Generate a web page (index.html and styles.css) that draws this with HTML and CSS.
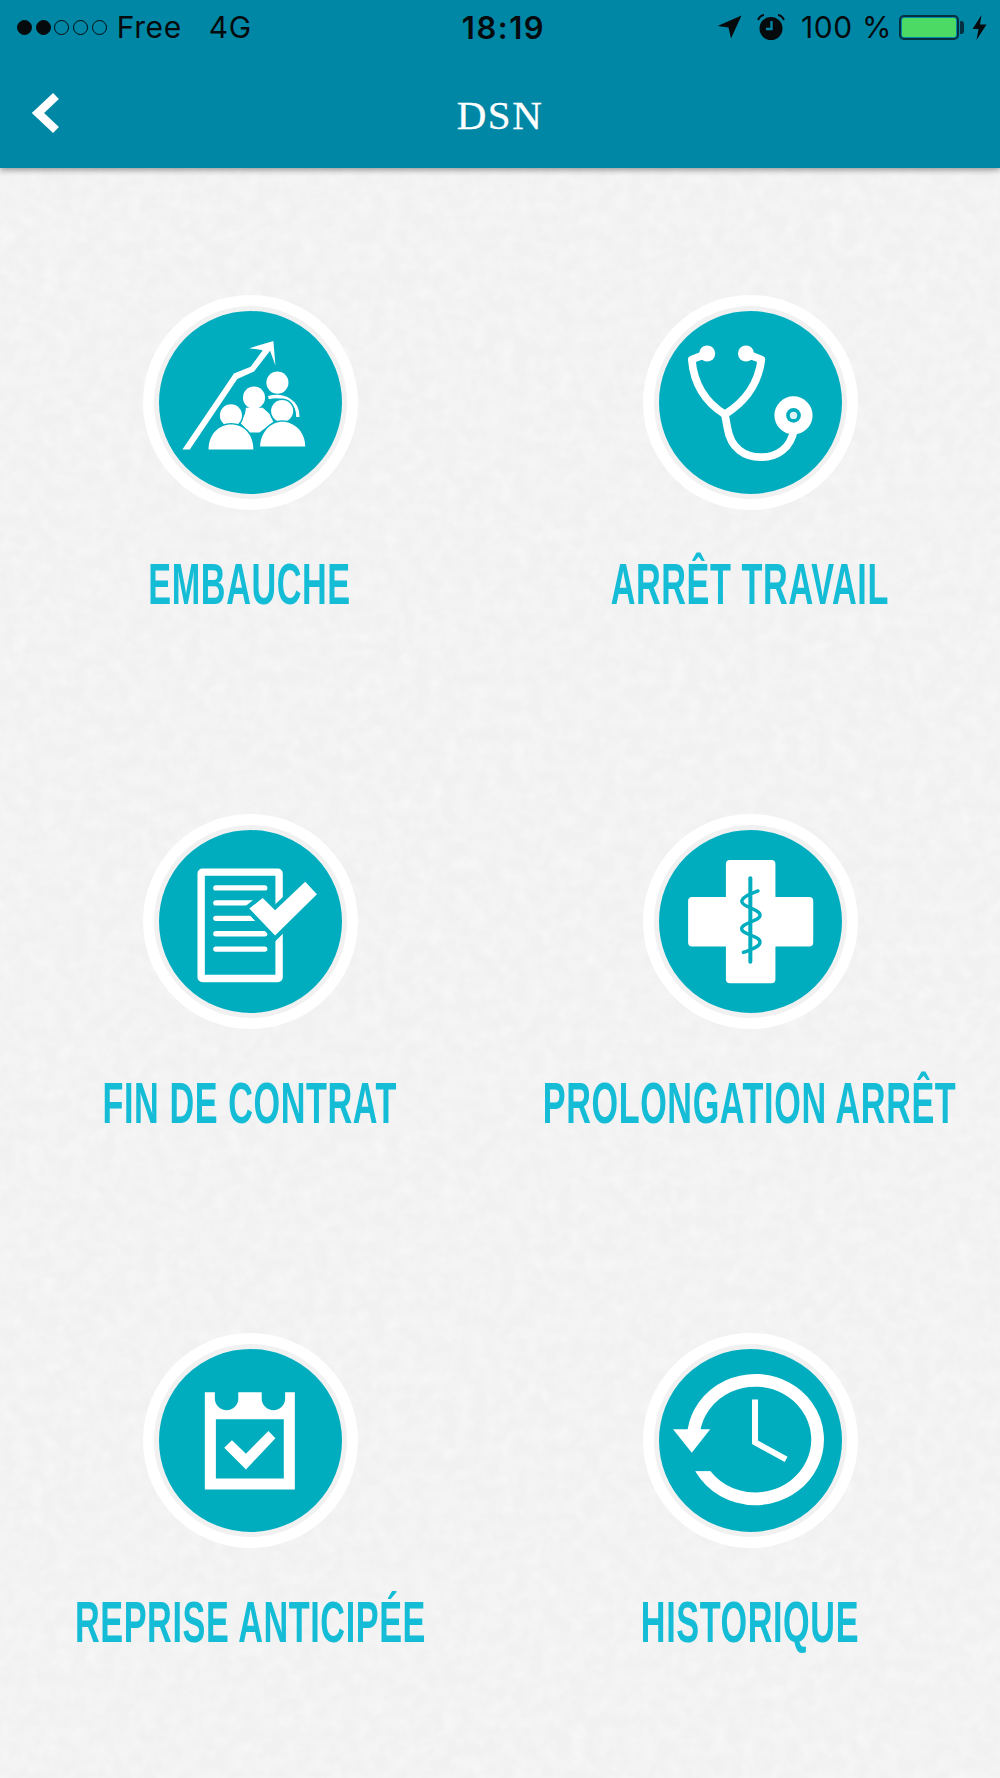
FILE: index.html
```html
<!DOCTYPE html>
<html lang="fr">
<head>
  <meta charset="UTF-8">
  <title>DSN</title>
  <link rel="stylesheet" href="styles.css">
</head>

<body>

  <!-- Paper texture behind the menu -->
  <svg class="paper" width="1000" height="1778" aria-hidden="true">
    <filter id="grain" x="0" y="0" width="100%" height="100%">
      <feTurbulence type="fractalNoise" baseFrequency="0.07" numOctaves="3" seed="4"/>
      <feColorMatrix type="matrix" values="0 0 0 0 1  0 0 0 0 1  0 0 0 0 1  0.5 0.5 0 0 -0.38"/>
    </filter>
    <rect width="1000" height="1778" filter="url(#grain)"/>
  </svg>

  <header class="topbar">
    <div class="status">
      <div class="status-left">
        <span class="signal">
          <i class="dot on"></i><i class="dot on"></i><i class="dot"></i><i class="dot"></i><i class="dot"></i>
        </span>
        <span class="carrier">Free</span>
        <span class="network">4G</span>
      </div>
      <div class="clock">18:19</div>
      <div class="status-right">
        <svg class="ico-loc" width="25" height="24" viewBox="0 0 25 24"><path d="M0.5 11 L24.5 0.5 L14 23.5 L11.5 12.5 Z"/></svg>
        <svg class="ico-alarm" width="28" height="26" viewBox="0 0 28 26">
          <circle cx="14" cy="14.5" r="11.5"/>
          <path d="M14.5 7 V15 H9" fill="none" stroke="#0087a5" stroke-width="2.4"/>
          <path d="M1 6 Q3 1.5 7 1 M27 6 Q25 1.5 21 1" fill="none" stroke="#050a0d" stroke-width="2"/>
        </svg>
        <span class="battery-pct">100 %</span>
        <span class="battery"><span class="battery-fill"></span></span>
        <svg class="ico-bolt" width="15" height="25" viewBox="0 0 15 25"><path d="M9.5 0 L0.5 14 H6.5 L4.5 25 L14.5 9.5 H8 Z"/></svg>
      </div>
    </div>
    <nav class="navbar">
      <svg class="back" width="30" height="42" viewBox="0 0 30 42"><path d="M25 4 L7 21 L25 38" fill="none" stroke="#fff" stroke-width="8.5"/></svg>
      <h1>DSN</h1>
    </nav>
  </header>

  <main class="menu">

    <a class="tile">
      <span class="disc">
        <svg viewBox="88 93 547 547">
          <path class="w" d="M158 507 H180 L322 296 L372 274 L420 212 L436 256 L430 183 L358 204 L398 210 L362 260 L312 280 Z"/>
          <circle class="w" cx="442" cy="307" r="33"/>
          <path class="wl" d="M415 352 C460 340 505 362 503 410"/>
          <circle class="w" cx="372" cy="352" r="33"/>
          <path class="w" d="M348 382 H398 L418 400 L430 425 L388 456 H356 L332 428 L345 400 Z"/>
          <circle class="wt" cx="303" cy="405" r="33"/>
          <path class="wt" d="M236 507 C236 460 268 432 303 432 C342 432 370 462 370 507 Z"/>
          <circle class="wt" cx="456" cy="392" r="33"/>
          <path class="wt" d="M390 498 C392 452 424 424 456 424 C494 424 525 456 525 498 Z"/>
        </svg>
      </span>
      <span class="label"><span>EMBAUCHE</span></span>
    </a>

    <a class="tile">
      <span class="disc">
        <svg viewBox="88 93 547 547">
          <circle class="w" cx="232" cy="220" r="24"/>
          <circle class="w" cx="348" cy="220" r="24"/>
          <path class="wl thick" d="M222 224 L186 238 C192 310 225 365 285 402 C345 365 385 310 394 238 L358 224"/>
          <path class="wl thick" d="M285 402 L292 440 C302 505 345 530 392 530 C440 530 482 505 492 445"/>
          <circle class="w" cx="490" cy="405" r="57"/>
          <circle class="t" cx="490" cy="405" r="22"/>
          <circle class="pale" cx="490" cy="405" r="11"/>
        </svg>
      </span>
      <span class="label"><span>ARRÊT TRAVAIL</span></span>
    </a>

    <a class="tile">
      <span class="disc">
        <svg viewBox="88 90 547 547">
          <rect x="214" y="216" width="233" height="318" rx="4" fill="none" stroke="#fff" stroke-width="22"/>
          <path class="wl line" d="M258 263 H404 M258 308 H404 M258 354 H404 M258 400 H404 M258 446 H404"/>
          <path class="wt check" d="M358 325 L398 293 L435 330 L525 245 L560 282 L435 405 Z"/>
        </svg>
      </span>
      <span class="label"><span>FIN DE CONTRAT</span></span>
    </a>

    <a class="tile">
      <span class="disc">
        <svg viewBox="88 90 547 547">
          <rect class="w" x="288" y="180" width="148" height="368" rx="12"/>
          <rect class="w" x="175" y="290" width="374" height="148" rx="12"/>
          <path class="rod" d="M361 234 V484"/>
          <path class="snake" d="M384 272 C352 284 332 294 336 306 C341 322 390 326 390 345 C390 362 335 368 335 385 C335 402 390 406 390 425 C390 440 362 448 340 456"/>
        </svg>
      </span>
      <span class="label"><span>PROLONGATION ARRÊT</span></span>
    </a>

    <a class="tile">
      <span class="disc">
        <svg viewBox="85 85 547 547">
          <path class="w" fill-rule="evenodd" d="M222 214 H252 V233 A35 35 0 0 0 322 233 V214 H392 V233 A35 35 0 0 0 462 233 V214 H491 V505 H222 Z M255 295 V472 H458 V295 Z"/>
          <path class="w" d="M280 380 L303 358 L345 398 L412 330 L433 352 L345 445 Z"/>
        </svg>
      </span>
      <span class="label"><span>REPRISE ANTICIPÉE</span></span>
    </a>

    <a class="tile">
      <span class="disc">
        <svg viewBox="85 85 547 547">
          <path class="arc" d="M189 330 A186 177 0 1 1 196 410"/>
          <rect class="t" x="160" y="395" width="90" height="55"/>
          <path class="w" d="M127 325 H238 L183 395 Z"/>
          <path class="hands" d="M372 236 V364 L465 415"/>
        </svg>
      </span>
      <span class="label"><span>HISTORIQUE</span></span>
    </a>

  </main>

</body>
</html>
```

FILE: styles.css
```css
body {
  margin: 0;
  width: 1000px;
  height: 1778px;
  overflow: hidden;
  position: relative;
  background-color: #f1f1f1;
  font-family: 'Inter', 'Liberation Sans', sans-serif;
  color: #050a0d;
}

.paper {
  position: absolute;
  top: 0;
  left: 0;
}

/* Top bar */
.topbar {
  position: relative;
  z-index: 1;
  height: 168px;
  background-color: #0087a5;
  box-shadow: 0 2px 6px rgba(0, 0, 0, 0.4);
}

.status {
  display: grid;
  grid-template-columns: 1fr auto 1fr;
  align-items: center;
  height: 54px;
  padding: 0 13px 0 17px;
  font-size: 30px;
  letter-spacing: 0.6px;
}

.status-left {
  display: flex;
  align-items: center;
}

.signal {
  display: flex;
  gap: 3.7px;
  margin-right: 10px;
}

.dot {
  width: 15px;
  height: 15px;
  box-sizing: border-box;
  border: 1.4px solid #050a0d;
  border-radius: 50%;
}

.dot.on {
  background: #050a0d;
}

.carrier {
  margin-right: 27px;
}

.clock {
  font-size: 31px;
  font-weight: 600;
  letter-spacing: 1.5px;
  margin-left: 3px;
}

.status-right {
  display: flex;
  align-items: center;
  justify-content: flex-end;
}

.status-right svg {
  fill: #050a0d;
}

.ico-loc {
  margin-right: 15px;
}

.ico-alarm {
  margin-right: 16px;
}

.battery-pct {
  margin-right: 7px;
}

.battery {
  position: relative;
  display: block;
  width: 60px;
  height: 25px;
  box-sizing: border-box;
  padding: 1px;
  border: 2px solid #05303f;
  border-radius: 5px;
  margin-right: 13px;
}

.battery::after {
  content: "";
  position: absolute;
  top: 4px;
  right: -7px;
  width: 4px;
  height: 13px;
  background: #05303f;
  border-radius: 0 3px 3px 0;
}

.battery-fill {
  display: block;
  height: 100%;
  background: #4cd964;
  border-radius: 2px;
}

.navbar {
  display: grid;
  grid-template-columns: 1fr auto 1fr;
  align-items: center;
  height: 114px;
  padding: 0 30px;
}

.navbar h1 {
  margin: 8px 0 0;
  font-family: 'Liberation Serif', serif;
  font-size: 41px;
  font-weight: 400;
  letter-spacing: 1.5px;
  -webkit-text-stroke: 0.3px #fff;
  color: #fff;
}

.back {
  margin-top: 4px;
  margin-left: 1px;
}

/* Menu grid */
.menu {
  position: relative;
  display: grid;
  grid-template-columns: 500px 500px;
  grid-template-rows: 519px 519px 1fr;
  height: 1483px;
  padding-top: 127px;
  overflow: hidden;
}

.tile {
  display: flex;
  flex-direction: column;
  align-items: center;
  min-width: 0;
}

.disc {
  display: block;
  width: 183px;
  height: 183px;
  border-radius: 50%;
  background: #00adbf;
  border: 5px solid #f1f1f1;
  box-shadow: 0 0 0 11px #fff;
  margin-top: 11px;
}

.disc svg {
  display: block;
  width: 183px;
  height: 183px;
}

.label {
  margin-top: 52px;
  height: 66px;
  line-height: 66px;
  white-space: nowrap;
  font-family: 'Liberation Sans Narrow', 'Liberation Sans', sans-serif;
  font-size: 58px;
  font-weight: 700;
  color: #14bcd6;
}

.label span {
  display: inline-block;
  transform: scaleX(0.59);
  letter-spacing: 1px;
}

/* Icon parts */
.w { fill: #fff; }
.t { fill: #00adbf; }
.pale { fill: #dff4f6; }

.wt {
  fill: #fff;
  stroke: #00adbf;
  stroke-width: 9;
  paint-order: stroke;
}

.wl {
  fill: none;
  stroke: #fff;
  stroke-width: 10;
}

.wl.thick {
  stroke-width: 23;
  stroke-linejoin: round;
}

.wl.line {
  stroke-width: 16;
  stroke-linecap: round;
}

.wt.check {
  stroke-width: 26;
}

.rod {
  fill: none;
  stroke: #00adbf;
  stroke-width: 12;
  stroke-linecap: round;
}

.snake {
  fill: none;
  stroke: #00adbf;
  stroke-width: 10;
  stroke-linecap: round;
}

.arc {
  fill: none;
  stroke: #fff;
  stroke-width: 38;
}

.hands {
  fill: none;
  stroke: #fff;
  stroke-width: 18;
}
```
